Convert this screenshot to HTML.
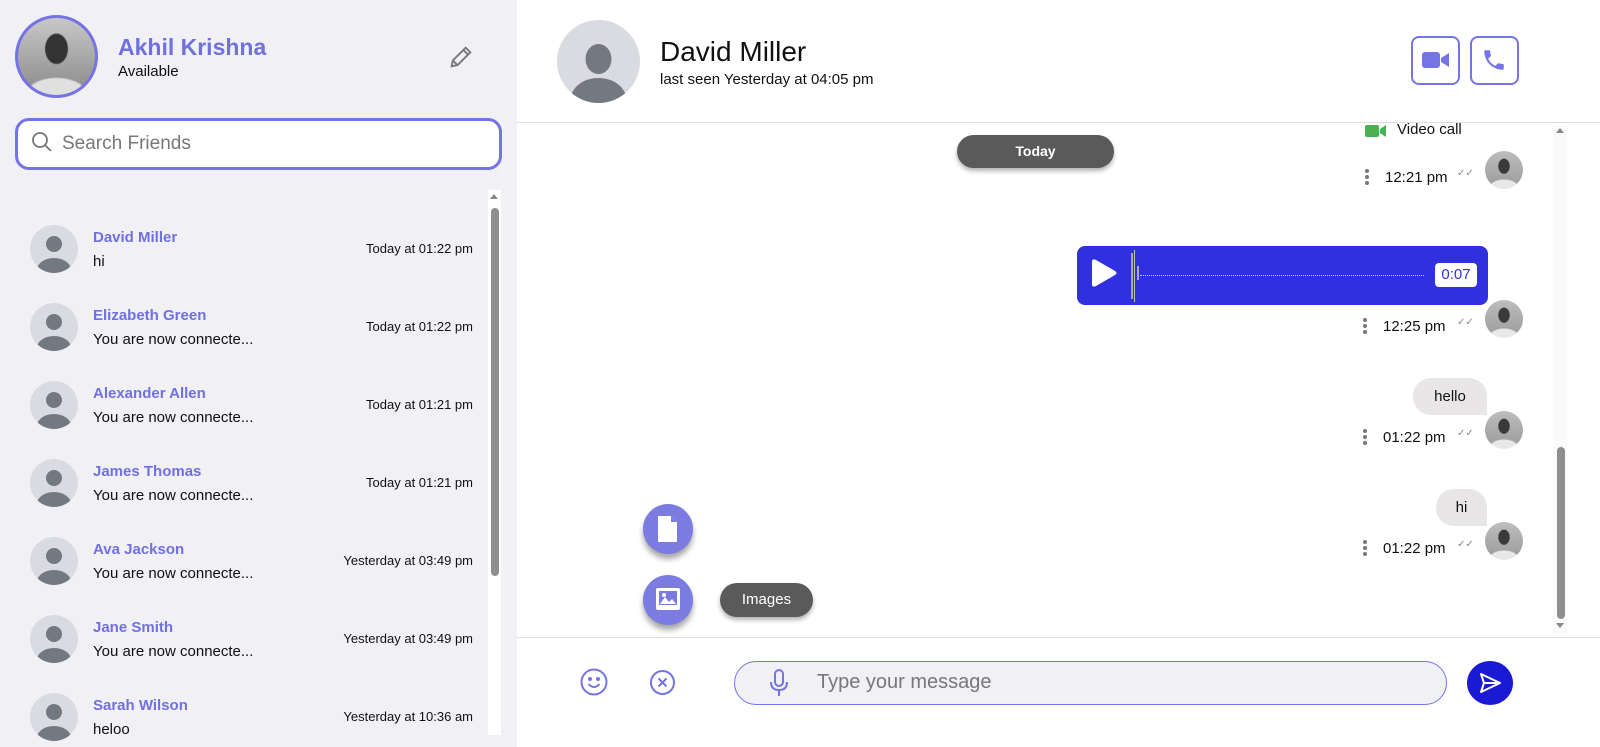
<!DOCTYPE html>
<html><head><style>
*{margin:0;padding:0;box-sizing:border-box}
body{width:1600px;height:747px;overflow:hidden;font-family:"Liberation Sans",sans-serif;background:#fff;position:relative}
.ab{position:absolute}
.left{left:0;top:0;width:517px;height:747px;background:#f0f0f5}
.av{width:48px;height:48px;border-radius:50%;background:#d9dbe0;overflow:hidden}
.name{color:#7070e0;font-size:15px;font-weight:bold}
.msg{font-size:15px;color:#111}
.time{font-size:13px;color:#111}
.me{width:38px;height:38px;border-radius:50%;background:radial-gradient(ellipse 6px 8px at 50% 40%,#3a3a3a 0 90%,transparent 100%),radial-gradient(ellipse 16px 10px at 50% 100%,#e8e8e8 0 90%,transparent 100%),linear-gradient(#bdbdbd,#9a9a9a)}
.dots{width:4px}
.dots i{display:block;width:4px;height:4px;border-radius:50%;background:#777;margin-bottom:2px}
.ts{font-size:15px;color:#111}
.chk{font-size:10px;color:#888}
.fab{width:50px;height:50px;border-radius:50%;background:#7b7be0;box-shadow:0 5px 6px rgba(0,0,0,.35)}
</style></head><body>
<div class="ab left"></div>
<div class="ab" style="left:15px;top:15px;width:83px;height:83px;border-radius:50%;border:3px solid #7474e4;background:radial-gradient(ellipse 12px 16px at 50% 40%,#333 0 90%,transparent 100%),radial-gradient(ellipse 32px 18px at 50% 100%,#e0e0e0 0 90%,transparent 100%),linear-gradient(#c8c8c8,#8a8a8a)"></div>
<div class="ab name" style="left:118px;top:34px;font-size:23px">Akhil Krishna</div>
<div class="ab" style="left:118px;top:63px;font-size:15px;color:#111">Available</div>
<svg class="ab" style="left:447px;top:43px" width="28" height="28" viewBox="0 0 24 24" fill="none" stroke="#777" stroke-width="1.6"><path d="M4 20l1-5L16 4l4 4L9 19zM14 6l4 4M5 15l4 4"/></svg>
<div class="ab" style="left:15px;top:118px;width:487px;height:52px;border:3px solid #7474e4;border-radius:14px;background:#fff"></div>
<svg class="ab" style="left:31px;top:131px" width="22" height="22" viewBox="0 0 22 22" fill="none" stroke="#777" stroke-width="1.8"><circle cx="9" cy="9" r="7"/><path d="M14 14l6 6"/></svg>
<div class="ab" style="left:62px;top:133px;font-size:19px;color:#777">Search Friends</div>
<div class="ab" style="left:488px;top:190px;width:13px;height:545px;background:#fff"></div>
<div class="ab" style="left:491px;top:208px;width:8px;height:368px;border-radius:4px;background:#8e8e8e"></div>
<div class="ab" style="left:490px;top:194px;width:0;height:0;border:4px solid transparent;border-bottom:5px solid #888;border-top:0"></div>

<div id="list"></div>
<script>
const f=[["David Miller","hi","Today at 01:22 pm"],["Elizabeth Green","You are now connecte...","Today at 01:22 pm"],["Alexander Allen","You are now connecte...","Today at 01:21 pm"],["James Thomas","You are now connecte...","Today at 01:21 pm"],["Ava Jackson","You are now connecte...","Yesterday at 03:49 pm"],["Jane Smith","You are now connecte...","Yesterday at 03:49 pm"],["Sarah Wilson","heloo","Yesterday at 10:36 am"]];
let h="";f.forEach((r,i)=>{const y=225+i*78;
h+=`<div class="ab av" style="left:30px;top:${y}px"><svg width="48" height="48"><circle cx="24" cy="19" r="8" fill="#737980"/><ellipse cx="24" cy="45" rx="17" ry="12" fill="#737980"/></svg></div>
<div class="ab name" style="left:93px;top:${y+4}px">${r[0]}</div><div class="ab msg" style="left:93px;top:${y+28}px">${r[1]}</div>
<div class="ab time" style="right:1127px;top:${y+16}px">${r[2]}</div>`});
document.getElementById("list").innerHTML=h;
</script>

<div class="ab" style="left:557px;top:20px;width:83px;height:83px;border-radius:50%;background:#d9dbe0;overflow:hidden"><svg width="83" height="83"><ellipse cx="41.5" cy="39" rx="13" ry="15" fill="#737980"/><ellipse cx="41.5" cy="80" rx="28" ry="22" fill="#737980"/></svg></div>
<div class="ab" style="left:660px;top:36px;font-size:28px;color:#111">David Miller</div>
<div class="ab" style="left:660px;top:71px;font-size:15px;color:#111">last seen Yesterday at 04:05 pm</div>
<div class="ab" style="left:1411px;top:36px;width:49px;height:49px;border:2px solid #7474e4;border-radius:8px"></div>
<svg class="ab" style="left:1422px;top:51px" width="28" height="18" viewBox="0 0 28 18"><rect x="0" y="1" width="18" height="16" rx="3" fill="#7474e4"/><path d="M19 7l8-5v14l-8-5z" fill="#7474e4"/></svg>
<div class="ab" style="left:1470px;top:36px;width:49px;height:49px;border:2px solid #7474e4;border-radius:8px"></div>
<svg class="ab" style="left:1481px;top:47px" width="26" height="26" viewBox="0 0 24 24"><path d="M6.6 10.8a15 15 0 006.6 6.6l2.2-2.2a1 1 0 011-.25 11.4 11.4 0 003.6.6 1 1 0 011 1V20a1 1 0 01-1 1A17 17 0 013 4a1 1 0 011-1h3.5a1 1 0 011 1c0 1.25.2 2.450.6 3.6a1 1 0 01-.25 1z" fill="#7474e4"/></svg>
<div class="ab" style="left:517px;top:122px;width:1083px;height:1px;background:#ddd"></div>
<div class="ab" style="left:517px;top:637px;width:1083px;height:1px;background:#ddd"></div>
<div class="ab" style="left:1553px;top:125px;width:14px;height:508px;background:#fafafa"></div>
<div class="ab" style="left:1557px;top:447px;width:8px;height:172px;border-radius:4px;background:#8e8e8e"></div>
<div class="ab" style="left:1556px;top:128px;border:4px solid transparent;border-bottom:5px solid #888;border-top:0"></div>
<div class="ab" style="left:1556px;top:623px;border:4px solid transparent;border-top:5px solid #888;border-bottom:0"></div>

<div class="ab" style="left:957px;top:135px;width:157px;height:33px;border-radius:17px;background:#5a5a5a;box-shadow:0 3px 5px rgba(0,0,0,.3);color:#fff;font-weight:bold;font-size:14px;text-align:center;line-height:33px">Today</div>

<svg class="ab" style="left:1365px;top:124px" width="22" height="14"><rect x="0" y="1" width="14" height="12" rx="2" fill="#4caf50"/><path d="M15 5l6-4v12l-6-4z" fill="#4caf50"/></svg>
<div class="ab" style="left:1397px;top:121px;font-size:15px;color:#111">Video call</div>

<div class="ab" style="left:1077px;top:246px;width:411px;height:59px;border-radius:8px;background:#3030e0"></div>
<svg class="ab" style="left:1090px;top:257px" width="30" height="34"><path d="M2 5q0-4 4-2l19 11q3 2 0 4l-19 11q-4 2-4-2z" fill="#fff"/></svg>
<div class="ab" style="left:1131px;top:253px;width:2px;height:46px;background:#aaa"></div>
<div class="ab" style="left:1134px;top:250px;width:1px;height:52px;background:#bbb"></div>
<div class="ab" style="left:1137px;top:266px;width:2px;height:14px;background:#aaa"></div>
<div class="ab" style="left:1140px;top:275px;width:284px;border-top:1px dotted #ccc"></div>
<div class="ab" style="left:1435px;top:263px;width:42px;height:24px;border-radius:4px;background:#fff;color:#3030e0;font-size:15px;text-align:center;line-height:24px">0:07</div>

<div class="ab" style="left:1413px;top:378px;width:74px;height:37px;border-radius:18px 18px 0 18px;background:#e8e6e6;font-size:15px;text-align:center;line-height:37px;color:#111">hello</div>
<div class="ab" style="left:1436px;top:489px;width:51px;height:37px;border-radius:18px 18px 0 18px;background:#e8e6e6;font-size:15px;text-align:center;line-height:37px;color:#111">hi</div>

<div id="ts"></div>
<script>
let t="";[[170,"12:21 pm",1385],[319,"12:25 pm",1383],[430,"01:22 pm",1383],[541,"01:22 pm",1383]].forEach(a=>{
t+=`<div class="ab dots" style="left:${a[2]-20}px;top:${a[0]-1}px"><i></i><i></i><i></i></div>
<div class="ab ts" style="left:${a[2]}px;top:${a[0]-1}px">${a[1]}</div>
<div class="ab chk" style="left:1457px;top:${a[0]-2}px">✓✓</div>
<div class="ab me" style="left:1485px;top:${a[0]-19}px"></div>`});
document.getElementById("ts").innerHTML=t;
</script>

<div class="ab fab" style="left:643px;top:504px"></div>
<svg class="ab" style="left:656px;top:514px" width="24" height="30" viewBox="0 0 24 30"><path d="M2 3q0-1 1-1h12l6 6v19q0 1-1 1H3q-1 0-1-1z" fill="#fff"/><path d="M15 2v6h6" fill="#7b7be0"/></svg>
<div class="ab fab" style="left:643px;top:575px"></div>
<svg class="ab" style="left:655px;top:587px" width="26" height="24" viewBox="0 0 26 24"><rect x="1" y="1" width="24" height="22" rx="2" fill="#fff"/><rect x="4" y="4" width="18" height="14" fill="#7b7be0"/><path d="M5 17l5-7 4 5 3-3 4 5z" fill="#fff"/><circle cx="9" cy="8" r="2" fill="#fff"/></svg>
<div class="ab" style="left:720px;top:583px;width:93px;height:34px;border-radius:17px;background:#5a5a5a;box-shadow:0 3px 5px rgba(0,0,0,.3);color:#fff;font-size:15px;text-align:center;line-height:34px">Images</div>

<svg class="ab" style="left:579px;top:667px" width="30" height="30" viewBox="0 0 30 30" fill="none" stroke="#7474e4" stroke-width="2"><circle cx="15" cy="15" r="12.5"/><path d="M9.5 17q5.5 6 11 0"/><circle cx="11" cy="12" r="1" fill="#7474e4"/><circle cx="19" cy="12" r="1" fill="#7474e4"/></svg>
<svg class="ab" style="left:649px;top:669px" width="27" height="27" viewBox="0 0 27 27" fill="none" stroke="#7474e4" stroke-width="2"><circle cx="13.5" cy="13.5" r="11.5"/><path d="M9.5 9.5l8 8M17.5 9.5l-8 8"/></svg>
<div class="ab" style="left:734px;top:661px;width:713px;height:44px;border:1px solid #7474e4;border-radius:22px;background:#f0f0f5"></div>
<svg class="ab" style="left:767px;top:668px" width="24" height="30" viewBox="0 0 24 30" fill="none" stroke="#7474e4" stroke-width="2"><rect x="8" y="2" width="8" height="16" rx="4"/><path d="M4 14q0 8 8 8t8-8M12 22v6"/></svg>
<div class="ab" style="left:817px;top:671px;font-size:20px;color:#777">Type your message</div>
<div class="ab" style="left:1467px;top:661px;width:46px;height:44px;border-radius:50%;background:#1a1ad4"></div>
<svg class="ab" style="left:1478px;top:671px" width="24" height="24" viewBox="0 0 24 24" fill="none" stroke="#fff" stroke-width="2" stroke-linejoin="round"><path d="M3 3l19 9-19 9 3-9zM6 12h16"/></svg>
</body></html>
